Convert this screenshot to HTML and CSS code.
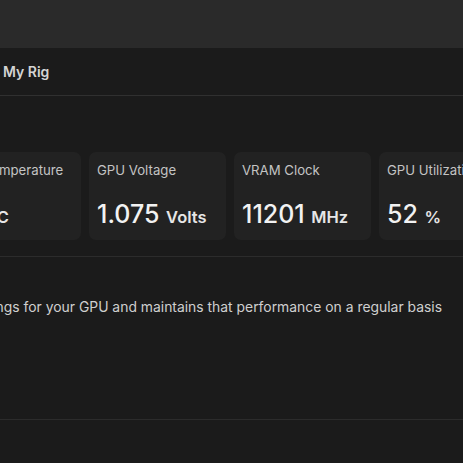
FILE: index.html
```html
<!DOCTYPE html>
<html lang="en">
<head>
<meta charset="utf-8">
<link rel="stylesheet" href="styles.css">
</head>
<body>
<div class="app">
  <div class="topbar"></div>
  <nav class="tabs">
    <span class="tab">My Rig</span>
  </nav>
  <section class="metrics">
    <div class="card">
      <div class="label">GPU Temperature</div>
      <div class="value">47 <span class="unit">°C</span></div>
    </div>
    <div class="card">
      <div class="label">GPU Voltage</div>
      <div class="value">1.075 <span class="unit">Volts</span></div>
    </div>
    <div class="card">
      <div class="label">VRAM Clock</div>
      <div class="value">11201 <span class="unit">MHz</span></div>
    </div>
    <div class="card">
      <div class="label">GPU Utilization</div>
      <div class="value">52 <span class="unit">%</span></div>
    </div>
  </section>
  <div class="divider first"></div>
  <section class="desc">
    <p class="desc-text">Automatic tuning scans and determines the optimal overclock settings for your GPU and maintains that performance on a regular basis</p>
  </section>
  <div class="divider second"></div>
</div>
</body>
</html>
```

FILE: styles.css
```css
* { box-sizing: border-box; }
html, body {
  margin: 0;
  padding: 0;
  background: #1b1b1b;
  overflow: hidden;
  width: 463px;
  height: 463px;
}
body {
  font-family: Inter, "Noto Sans", "Liberation Sans", sans-serif;
  color: #d6d6d6;
}
.app { width: 463px; }
.topbar {
  height: 48px;
  background: #2a2a2a;
}
.tabs {
  height: 48px;
  display: flex;
  align-items: center;
  padding-left: 3px;
  border-bottom: 1px solid #303030;
}
.tab {
  font-size: 14px;
  font-weight: 600;
  color: #d4d4d4;
  line-height: 20px;
}
.metrics {
  display: flex;
  gap: 8px;
  margin-left: -56px;
  padding-top: 56px;
}
.card {
  flex: 0 0 137px;
  height: 88px;
  background: #222222;
  border-radius: 7px;
  padding: 9px 8px 8px;
  display: flex;
  flex-direction: column;
  justify-content: space-between;
  white-space: nowrap;
  overflow: hidden;
}
.label {
  font-size: 13.2px;
  line-height: 18px;
  color: #c4c4c4;
}
.value {
  font-size: 25px;
  line-height: 30px;
  font-weight: 500;
  color: #f2f2f2;
}
.unit {
  font-size: 16.5px;
  font-weight: 600;
  color: #e6e6e6;
}
.divider {
  height: 1px;
  background: #2c2c2c;
}
.divider.first { margin-top: 16px; }
.desc {
  display: flex;
  justify-content: flex-end;
  width: 442px;
  height: 162px;
  padding-top: 40px;
}
.desc-text {
  margin: 0;
  white-space: nowrap;
  font-size: 13.9px;
  line-height: 20px;
  color: #cfcfcf;
}
```
